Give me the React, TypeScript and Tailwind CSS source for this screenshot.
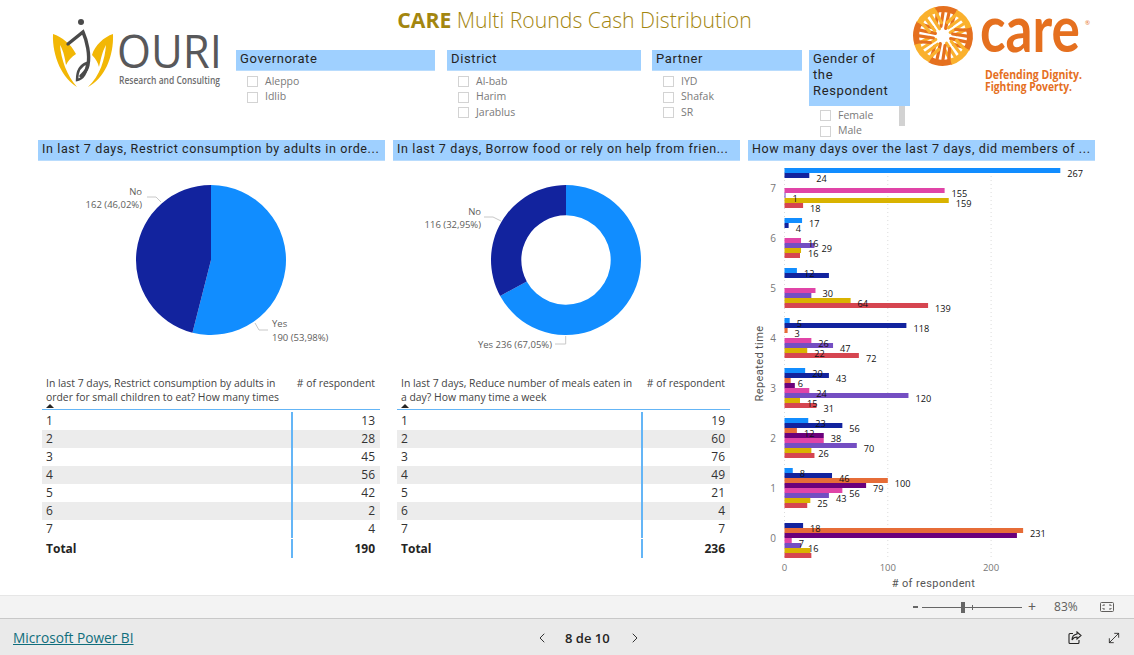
import React from 'react'
import { ChevronLeft, ChevronRight, MoveDiagonal } from 'lucide-react'

const COLORS = ['#118dff', '#12239e', '#e66c37', '#6b007b', '#e044a7', '#744ec2', '#d9b300', '#d64550']
const SCALE = 1.033
const LABEL = 'font-[Open_Sans,sans-serif]'
const DIN = 'font-[Roboto,sans-serif] tracking-[0.62px]'

// [value, show label] per series, null when the series has no data for that day
type Bar = [number, boolean] | null
const groups: { day: number; bars: Bar[] }[] = [
  { day: 7, bars: [[267, true], [24, true], null, null, [155, true], [1, true], [159, true], [18, true]] },
  { day: 6, bars: [[17, true], [4, true], null, null, [16, true], [29, true], [16, true], [15, false]] },
  { day: 5, bars: [[12, true], [43, false], null, null, [30, true], [26, false], [64, true], [139, true]] },
  { day: 4, bars: [[5, true], [118, true], [3, true], null, [26, true], [47, true], [22, true], [72, true]] },
  { day: 3, bars: [[20, true], [43, true], [6, true], [10, false], [24, true], [120, true], [15, true], [31, true]] },
  { day: 2, bars: [[23, true], [56, true], [12, true], [38, true], [38, false], [70, true], [26, true], [29, false]] },
  { day: 1, bars: [[8, true], [46, true], [100, true], [79, true], [56, true], [43, true], [25, true], [22, false]] },
  { day: 0, bars: [null, [18, true], [231, true], [225, false], [7, true], [16, true], [25, false], [26, false]] },
]

const slicers = [
  { title: 'Governorate', items: ['Aleppo', 'Idlib'], className: 'w-[199px] ml-0' },
  { title: 'District', items: ['Al-bab', 'Harim', 'Jarablus'], className: 'w-[194px] ml-[12px]' },
  { title: 'Partner', items: ['IYD', 'Shafak', 'SR'], className: 'w-[150px] ml-[11px]' },
]

const table1 = ['13', '28', '45', '56', '42', '2', '4']
const table2 = ['19', '60', '76', '49', '21', '4', '7']

function arc(cx: number, cy: number, r: number, from: number, to: number, inner = 0) {
  const pt = (a: number, rad: number) => {
    const t = (a / 100) * 2 * Math.PI
    return `${cx + rad * Math.sin(t)} ${cy - rad * Math.cos(t)}`
  }
  const large = to - from > 50 ? 1 : 0
  if (!inner) return `M${cx} ${cy}L${pt(from, r)}A${r} ${r} 0 ${large} 1 ${pt(to, r)}Z`
  return `M${pt(from, r)}A${r} ${r} 0 ${large} 1 ${pt(to, r)}L${pt(to, inner)}A${inner} ${inner} 0 ${large} 0 ${pt(from, inner)}Z`
}

function OuriLogo() {
  return (
    <svg viewBox="0 0 190 90" className="w-[190px] h-[90px]">
      <path d="M13 29C22 32 31 39 36 49C31 52 28 56 26 60C25 54 24 47 20 40C21 54 27 71 37 82C23 74 12 52 13 29Z" fill="#f2b705" />
      <path d="M73 29C64 32 55 40 52 50C56 54 58 58 59 62C61 54 62 47 66 40C65 54 60 71 48 82C64 74 74 52 73 29Z" fill="#f2b705" />
      <circle cx="41" cy="17" r="3" fill="#4a4a4a" />
      <path d="M28 39L43 27C47 36 50 50 48 60C47 66 44 68 41 71" fill="none" stroke="#4a4a4a" strokeWidth="3.4" strokeLinecap="round" />
      <path d="M47 58C41 60 37 66 37 75C43 74 47 68 47 58Z" fill="none" stroke="#4a4a4a" strokeWidth="2.4" />
      <text x="77" y="63" fill="#58585a" fontSize="46" textLength="105" lengthAdjust="spacingAndGlyphs" fontFamily="Open Sans, sans-serif">OURI</text>
      <text x="79" y="79" fill="#6d6d6d" fontSize="10" fontWeight="600" textLength="101" lengthAdjust="spacingAndGlyphs" fontFamily="Open Sans, sans-serif">Research and Consulting</text>
    </svg>
  )
}

function CareLogo() {
  const hands = [0, 45, 90, 135, 180, 225, 270, 315]
  return (
    <svg viewBox="8 0 182 100" className="w-[182px] h-[100px]">
      <g transform="translate(38 36)">
        {hands.map((deg, i) => (
          <g key={deg} transform={`rotate(${deg + 12})`} stroke={i % 2 ? '#fab12e' : '#e5701f'} fill="none">
            <path d="M-13 -23.5A27 27 0 0 1 8 -25.8" strokeWidth="6" />
            <path d="M-11 -24L-9 -11M-5 -25L-4 -9M1 -25L1 -8M7 -25L6 -12" strokeWidth="3.2" strokeLinecap="round" />
          </g>
        ))}
      </g>
      <text x="75" y="52" fill="#e5701f" fontSize="64" fontWeight="700" textLength="100" lengthAdjust="spacingAndGlyphs" fontFamily="Lato, sans-serif">care</text>
      <text x="180" y="25" fill="#e5701f" fontSize="6" fontFamily="Open Sans, sans-serif">®</text>
      <text x="80" y="79" fill="#e5701f" fontSize="11.5" fontWeight="700" textLength="97" lengthAdjust="spacingAndGlyphs" fontFamily="Open Sans, sans-serif">Defending Dignity.</text>
      <text x="80" y="91" fill="#e5701f" fontSize="11.5" fontWeight="700" textLength="87" lengthAdjust="spacingAndGlyphs" fontFamily="Open Sans, sans-serif">Fighting Poverty.</text>
    </svg>
  )
}

function SlicerItem({ label }: { label: string }) {
  return (
    <div className="flex items-center h-[15.5px] pl-[11px]">
      <span className="w-[11px] h-[11px] border border-[#d3d3d3] bg-white" />
      <span className={`ml-[7px] text-[10.5px] text-[#7a7a7a] ${LABEL}`}>{label}</span>
    </div>
  )
}

function ChartTitle({ text }: { text: string }) {
  return (
    <div className={`h-[21px] bg-[#9fd0ff] border-b border-[#b9dcfd] px-[4px] text-[12.5px] leading-[18px] text-[#252423] truncate ${DIN}`}>{text}</div>
  )
}

function PieSvg({ yes, inner, children }: { yes: number; inner?: number; children: React.ReactNode }) {
  const cx = inner ? 566 : 211
  const origin = inner ? '393 161 347 214' : '38 161 347 214'
  return (
    <svg viewBox={origin} className="w-[347px] h-[214px]">
      <path d={arc(cx, 260, 75, 0, yes, inner)} fill="#118dff" />
      <path d={arc(cx, 260, 75, yes, 100, inner)} fill="#12239e" />
      {children}
    </svg>
  )
}

function PieText({ x, y, end, children }: { x: number; y: number; end?: boolean; children: React.ReactNode }) {
  return (
    <text x={x} y={y} fill="#605e5c" fontSize="9.5" textAnchor={end ? 'end' : 'start'} fontFamily="Open Sans, sans-serif">{children}</text>
  )
}

function DataTable({ heading, values, total, first, className }: { heading: string; values: string[]; total: string; first: string; className: string }) {
  return (
    <div className={`${className} ${LABEL}`}>
      <div className="flex h-[35px] border-b border-[#64b5f6] relative text-[10.4px] leading-[14px] text-[#444]">
        <div className={`${first} pl-[4px] pr-[8px] pt-[1px]`}>{heading}</div>
        <div className="flex-1 pr-[5px] pt-[1px] text-right">
          # of respondent
        </div>
        <span className="absolute left-[4px] bottom-[1px] border-x-[4px] border-x-transparent border-b-[4px] border-b-[#252423]" />
      </div>
      <div className="pt-[2px]">
        {values.map((v, i) => (
          <div key={i} className={`flex h-[18px] items-center text-[12px] text-[#333] ${i % 2 ? 'bg-[#ececec]' : ''}`}>
            <div className={`${first} h-full pl-[4px] leading-[18px] border-r-2 border-[#64b5f6]`}>{i + 1}</div>
            <div className="flex-1 pr-[5px] text-right">{v}</div>
          </div>
        ))}
        <div className="flex h-[19px] mt-[1px] items-center text-[12px] font-bold text-[#252423]">
          <div className={`${first} h-full pl-[4px] leading-[20px] border-r-2 border-[#64b5f6]`}>Total</div>
          <div className="flex-1 pr-[5px] text-right">{total}</div>
        </div>
      </div>
    </div>
  )
}

function BarChart() {
  const x0 = 784.5
  return (
    <svg viewBox="748 161 347 434" className="w-[347px] h-[434px]">
      {[0, 100, 200].map(t => (
        <g key={t}>
          <line x1={x0 + t * SCALE} x2={x0 + t * SCALE} y1="168" y2="560" stroke="#dcdcdc" strokeDasharray="1 3" />
          <text x={x0 + t * SCALE} y="571" textAnchor="middle" fontSize="9.5" fill="#777" fontFamily="Open Sans, sans-serif">{t}</text>
        </g>
      ))}
      {groups.map((g, gi) => {
        const top = 168 + gi * 50
        return (
          <g key={g.day}>
            <text x="773" y={top + 24} textAnchor="middle" fontSize="10" fill="#777" fontFamily="Open Sans, sans-serif">{g.day}</text>
            {g.bars.map((b, i) => b && (
              <rect key={i} x={x0} y={top + i * 5} width={b[0] * SCALE} height="5" fill={COLORS[i]} />
            ))}
          </g>
        )
      })}
      {/* labels go last so no bar covers them */}
      {groups.map((g, gi) => g.bars.map((b, i) => b && b[1] && (
        <text key={`${g.day}-${i}`} x={x0 + b[0] * SCALE + 7} y={168 + gi * 50 + i * 5 + 9} fontSize="9.2" fill="#111" fontFamily="Open Sans, sans-serif">{b[0]}</text>
      )))}
      <text x="933.5" y="587" textAnchor="middle" fontSize="11" letterSpacing="0.4" fill="#555" fontFamily="Roboto, sans-serif"># of respondent</text>
      <text transform="translate(763 363.5) rotate(-90)" textAnchor="middle" fontSize="11" letterSpacing="0.4" fill="#555" fontFamily="Roboto, sans-serif">Repeated time</text>
    </svg>
  )
}

export default function App() {
  return (
    <div className="w-[1134px] h-[655px] overflow-hidden bg-white flex flex-col">
      <div className="h-[595px]">
        {/* header with logos, title and slicers */}
        <div className="flex h-[140px]">
          <div className="w-[236px] pl-[40px] pt-[5px] shrink-0">
            <OuriLogo />
          </div>
          <div className="w-[677px] shrink-0">
            <div className={`h-[50px] pt-[5px] text-center text-[21.2px] leading-[30px] text-[#a3860f] font-[Open_Sans,sans-serif] font-light`}>
              <span className="font-bold">CARE</span> Multi Rounds Cash Distribution
            </div>
            <div className="flex">
              {slicers.map(s => (
                <div key={s.title} className={s.className}>
                  <div className={`h-[21px] bg-[#9fd0ff] border-b border-[#b9dcfd] px-[4px] text-[13px] leading-[18px] text-[#252423] ${DIN}`}>{s.title}</div>
                  <div className="pt-[3px]">
                    {s.items.map(i => <SlicerItem key={i} label={i} />)}
                  </div>
                </div>
              ))}
              <div className="w-[101px] ml-[7px] relative h-[89px] overflow-hidden">
                <div className={`h-[56px] bg-[#9fd0ff] pl-[4px] pr-[14px] pt-[1px] text-[13px] leading-[16px] text-[#252423] ${DIN}`}>Gender of the Respondent</div>
                <div className="pt-[2px]">
                  <SlicerItem label="Female" />
                  <SlicerItem label="Male" />
                </div>
                <span className="absolute left-[90px] top-[56px] w-[6px] h-[20px] bg-[#d2d2d2]" />
              </div>
            </div>
          </div>
          <div className="shrink-0">
            <CareLogo />
          </div>
        </div>

        {/* three visual columns */}
        <div className="grid grid-cols-[347px_347px_347px] gap-x-[8px] px-[38px]">
          <div>
            <ChartTitle text="In last 7 days, Restrict consumption by adults in orde..." />
            <PieSvg yes={53.98}>
              <path d="M147 197H156L161 202M255 323L259 330H268" fill="none" stroke="#c8c8c8" />
              <PieText x={142} y={195} end>No</PieText>
              <PieText x={142} y={208} end>162 (46,02%)</PieText>
              <PieText x={272} y={327}>Yes</PieText>
              <PieText x={272} y={341}>190 (53,98%)</PieText>
            </PieSvg>
            <DataTable
              className="ml-[4px] w-[338px]"
              first="w-[251px]"
              heading="In last 7 days, Restrict consumption by adults in order for small children to eat? How many times"
              values={table1}
              total="190"
            />
          </div>
          <div>
            <ChartTitle text="In last 7 days, Borrow food or rely on help from frien..." />
            <PieSvg yes={67.05} inner={44.7}>
              <path d="M484 217H493L501 221M555 344H565.7V336" fill="none" stroke="#c8c8c8" />
              <PieText x={481} y={215} end>No</PieText>
              <PieText x={481} y={228} end>116 (32,95%)</PieText>
              <PieText x={552} y={348} end>Yes 236 (67,05%)</PieText>
            </PieSvg>
            <DataTable
              className="ml-[4px] w-[333px]"
              first="w-[246px]"
              heading="In last 7 days, Reduce number of meals eaten in a day? How many time a week"
              values={table2}
              total="236"
            />
          </div>
          <div>
            <ChartTitle text="How many days over the last 7 days, did members of ..." />
            <BarChart />
          </div>
        </div>
      </div>

      {/* zoom bar */}
      <div className="h-[24px] bg-[#f3f3f3] border-y border-t-[#e6e6e6] border-b-[#c8c8c8] flex items-center text-[#605e5c]">
        <span className="ml-[913px] w-[5px] h-[2px] bg-[#666]" />
        <div className="ml-[4px] w-[100px] h-[1px] bg-[#666] relative">
          <span className="absolute left-[39px] -top-[5px] w-[4px] h-[11px] bg-[#666]" />
          <span className="absolute left-[50px] -top-[2px] w-[1px] h-[5px] bg-[#666]" />
        </div>
        <span className="ml-[6px] text-[14px] leading-none">+</span>
        <span className={`ml-[18px] text-[12px] ${LABEL}`}>83%</span>
        <svg viewBox="0 0 14 10" className="ml-[22px] w-[14px] h-[10px]" fill="none" stroke="#605e5c">
          <rect x="0.5" y="0.5" width="13" height="9" rx="1" />
          <path d="M3 4V3H5M9 3H11V4M3 6V7H5M9 7H11V6" />
        </svg>
      </div>

      {/* footer */}
      <div className="flex-1 bg-[#eaeaea] flex items-center relative">
        <a className={`ml-[13px] pt-[3px] text-[13.7px] underline text-[#106e7c] ${LABEL}`}>Microsoft Power BI</a>
        <ChevronLeft className="absolute left-[534px] top-[11px] w-[16px] h-[16px] text-[#333]" strokeWidth={1.5} />
        <span className={`absolute left-[565px] top-[11px] text-[13px] leading-[17px] font-semibold text-[#252423] ${LABEL}`}>8 de 10</span>
        <ChevronRight className="absolute left-[627px] top-[11px] w-[16px] h-[16px] text-[#333]" strokeWidth={1.5} />
        <svg viewBox="0 0 14 14" className="absolute left-[1068px] top-[12px] w-[14px] h-[14px]" fill="none" stroke="#252423" strokeWidth="1.1">
          <path d="M5 2.5H2A1 1 0 0 0 1 3.5V11.5A1 1 0 0 0 2 12.5H10A1 1 0 0 0 11 11.5V9" />
          <path d="M9 1L13 4.5L9 8V6C6.5 6 5 7 4 9C4 6 6 3.5 9 3Z" />
        </svg>
        <MoveDiagonal className="absolute left-[1106px] top-[11px] w-[16px] h-[16px] text-[#252423]" strokeWidth={1.3} />
      </div>
    </div>
  )
}
